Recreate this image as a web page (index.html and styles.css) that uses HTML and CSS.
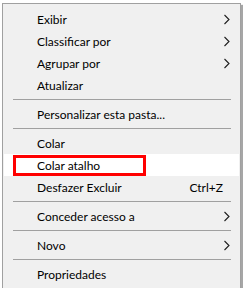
FILE: index.html
```html
<!DOCTYPE html>
<html lang="pt">
<head>
<meta charset="utf-8">
<link rel="stylesheet" href="styles.css">
</head>
<body>
<div class="menu">
  <ul class="items">
    <li class="item"><span class="label">Exibir</span><span class="key"></span><svg class="arrow" viewBox="0 0 6 10"><polyline points="0.5,0.5 5,5 0.5,9.5"/></svg></li>
    <li class="item"><span class="label">Classificar por</span><span class="key"></span><svg class="arrow" viewBox="0 0 6 10"><polyline points="0.5,0.5 5,5 0.5,9.5"/></svg></li>
    <li class="item"><span class="label">Agrupar por</span><span class="key"></span><svg class="arrow" viewBox="0 0 6 10"><polyline points="0.5,0.5 5,5 0.5,9.5"/></svg></li>
    <li class="item"><span class="label">Atualizar</span></li>
    <li class="sep"></li>
    <li class="item"><span class="label">Personalizar esta pasta...</span></li>
    <li class="sep"></li>
    <li class="item"><span class="label">Colar</span></li>
    <li class="item hover"><span class="label">Colar atalho</span><span class="mark"></span></li>
    <li class="item"><span class="label">Desfazer Excluir</span><span class="key">Ctrl+Z</span></li>
    <li class="sep"></li>
    <li class="item"><span class="label">Conceder acesso a</span><span class="key"></span><svg class="arrow" viewBox="0 0 6 10"><polyline points="0.5,0.5 5,5 0.5,9.5"/></svg></li>
    <li class="sep"></li>
    <li class="item"><span class="label">Novo</span><span class="key"></span><svg class="arrow" viewBox="0 0 6 10"><polyline points="0.5,0.5 5,5 0.5,9.5"/></svg></li>
    <li class="sep"></li>
    <li class="item"><span class="label">Propriedades</span></li>
  </ul>
</div>
</body>
</html>
```
FILE: styles.css
```css
html, body {
  margin: 0;
  padding: 0;
  background: #ffffff;
  overflow: hidden;
}
body {
  font-family: Lato, "Noto Sans", sans-serif;
  font-size: 12px;
  color: #000;
}
.menu {
  margin: 3px 0 0 2px;
  width: 237px;
  height: 300px;
  background: #f0f0f0;
  border: 1px solid #a0a0a0;
  box-shadow: 2px 2px 1px rgba(0, 0, 0, 0.35);
}
.items {
  list-style: none;
  margin: 0;
  padding: 4px 0 0 0;
}
.item {
  position: relative;
  height: 22px;
  margin: 0 1px 0 1px;
  padding: 0 9px 0 33px;
  display: grid;
  grid-template-columns: 1fr auto 6px;
  align-items: center;
}
.item.hover {
  background: #ffffff;
}
.label {
  white-space: nowrap;
}
.key {
  white-space: nowrap;
  padding-right: 1px;
}
.arrow {
  width: 6px;
  height: 11px;
  fill: none;
  stroke: #1e1e1e;
  stroke-width: 1.1;
}
.sep {
  height: 7px;
  margin: 0 9px 0 10px;
  display: flex;
  align-items: flex-start;
}
.sep::before {
  content: "";
  display: block;
  margin-top: 3px;
  height: 1px;
  width: 100%;
  background: #a0a0a0;
}
.mark {
  position: absolute;
  left: 9px;
  top: 1px;
  width: 127px;
  height: 15px;
  border: 3px solid #ff0000;
}
```
